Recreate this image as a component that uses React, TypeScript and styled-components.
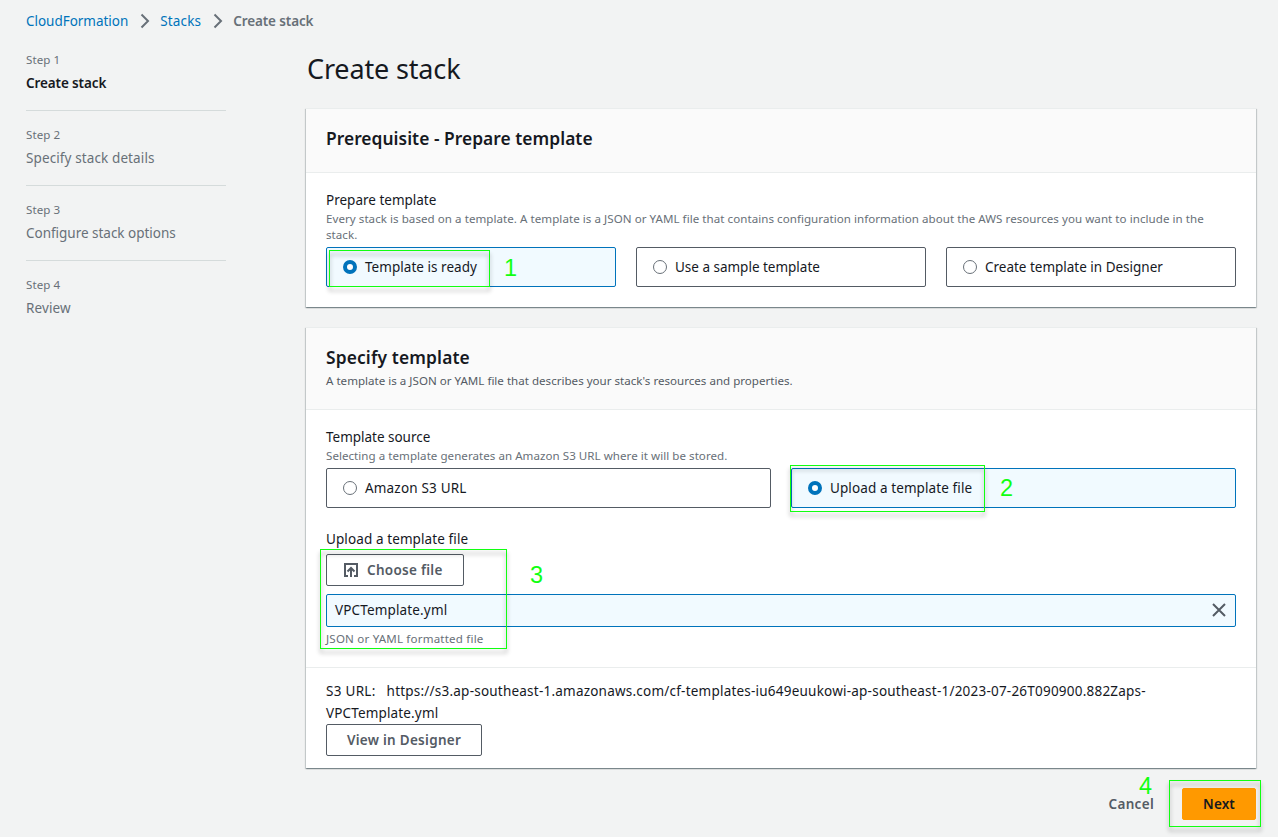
import React from "react";
import styled, { createGlobalStyle, css } from "styled-components";

const GlobalStyle = createGlobalStyle`
  * { box-sizing: border-box; }
  body {
    margin: 0;
    background: #f2f3f3;
    color: #16191f;
    font: 400 13.5px/22px "Noto Sans", "Open Sans", sans-serif;
  }
  h1, h2, p, ol, ul { margin: 0; padding: 0; list-style: none; }
`;

/* $track: letter spacing in px */
type Track = { $track?: number };
const track = css<Track>`
  letter-spacing: ${(p) => p.$track ?? 0}px;
  white-space: nowrap;
`;

const Page = styled.div`
  position: relative;
  width: 1278px;
  height: 837px;
  overflow: hidden;
  padding: 10px 22px 0 26px;
`;

const Breadcrumbs = styled.nav`
  display: flex;
  align-items: center;
  height: 22px;
`;

const Crumb = styled.a<Track>`
  ${track}
  color: #0073bb;
`;

const CurrentCrumb = styled.span<Track>`
  ${track}
  color: #687078;
  font-weight: 600;
`;

const Chevron = styled.svg`
  width: 10px;
  height: 16px;
  margin: 0 10px 0 12px;
  fill: none;
  stroke: #687078;
  stroke-width: 2;
`;

const Columns = styled.div`
  display: flex;
  gap: 79px;
`;

const Steps = styled.ol`
  width: 201px;
  padding-top: 17px;
`;

const Step = styled.li`
  height: 75px;

  &:not(:last-child)::after {
    content: "";
    display: block;
    width: 200px;
    height: 1px;
    margin-top: 16px;
    background: #d5dbdb;
  }
`;

const StepNumber = styled.div<Track>`
  ${track}
  height: 22px;
  color: #687078;
  font-size: 11.57px;
`;

const StepName = styled.div<Track & { $active?: boolean }>`
  ${track}
  height: 23px;
  line-height: 24px;
  color: ${(p) => (p.$active ? "#16191f" : "#687078")};
  font-weight: ${(p) => (p.$active ? 600 : 400)};
`;

const Main = styled.main`
  width: 950px;
`;

const Title = styled.h1<Track>`
  ${track}
  height: 76px;
  padding: 19px 0 0 1px;
  font-size: 27px;
  font-weight: 400;
  line-height: 36px;
`;

const Card = styled.section`
  margin-bottom: 20px;
  background: #fff;
  border-top: 1px solid #eaeded;
  box-shadow: 0 1px 1px 0 rgba(0, 28, 36, 0.3), 1px 1px 1px 0 rgba(0, 28, 36, 0.15),
    -1px 1px 1px 0 rgba(0, 28, 36, 0.15);
`;

const CardHeader = styled.header<{ $height: number }>`
  height: ${(p) => p.$height}px;
  padding: 18px 20px 0;
  background: #fafafa;
  border-bottom: 1px solid #eaeded;
`;

const CardTitle = styled.h2<Track>`
  ${track}
  font-size: 17.36px;
  font-weight: 600;
  line-height: 22px;
`;

const CardSubtitle = styled.p<Track>`
  ${track}
  padding-top: 4px;
  color: #545b64;
  font-size: 11.57px;
  line-height: 18px;
`;

const CardBody = styled.div`
  padding: 16px 20px 20px;
`;

const Label = styled.div<Track>`
  ${track}
  height: 22px;
`;

const Hint = styled.p<Track>`
  ${track}
  color: #687078;
  font-size: 11.57px;
  line-height: 16px;
`;

const Tiles = styled.div<{ $columns: number }>`
  display: grid;
  grid-template-columns: repeat(${(p) => p.$columns}, 1fr);
  gap: 20px;
  padding-top: 4px;
`;

const Tile = styled.label<Track & { $selected?: boolean }>`
  ${track}
  display: flex;
  align-items: center;
  gap: 8px;
  height: 40px;
  padding-left: 16px;
  border: 1px solid ${(p) => (p.$selected ? "#0073bb" : "#545b64")};
  border-radius: 2px;
  background: ${(p) => (p.$selected ? "#f1faff" : "#fff")};
`;

const Radio = styled.span<{ $selected?: boolean }>`
  width: 14px;
  height: 14px;
  border: ${(p) => (p.$selected ? "4px solid #0073bb" : "1px solid #687078")};
  border-radius: 50%;
  background: #fff;
`;

const UploadField = styled.div`
  padding-top: 20px;
`;

const Button = styled.button<Track & { $width: number; $primary?: boolean }>`
  ${track}
  display: flex;
  align-items: center;
  justify-content: center;
  gap: 8px;
  width: ${(p) => p.$width}px;
  height: 32px;
  padding: 0;
  border: 1px solid ${(p) => (p.$primary ? "#ff9900" : "#545b64")};
  border-radius: 2px;
  background: ${(p) => (p.$primary ? "#ff9900" : "#fff")};
  color: ${(p) => (p.$primary ? "#16191f" : "#545b64")};
  font: 600 13.5px/22px "Noto Sans", "Open Sans", sans-serif;
`;

const ChooseButton = styled(Button)`
  justify-content: flex-start;
  margin-top: 4px;
  padding-left: 16px;
`;

const UploadIcon = styled.svg`
  width: 16px;
  height: 16px;
  fill: none;
  stroke: #545b64;
  stroke-width: 2;
`;

const FileToken = styled.div<Track>`
  ${track}
  display: flex;
  align-items: center;
  justify-content: space-between;
  height: 33px;
  margin: 8px 0 4px;
  padding: 0 9px 1px 8px;
  border: 1px solid #0073bb;
  border-radius: 2px;
  background: #f1faff;
`;

const CloseIcon = styled.svg`
  width: 14px;
  height: 14px;
  fill: none;
  stroke: #545b64;
  stroke-width: 2;
`;

const UrlSection = styled.div`
  padding: 12px 20px 12px;
  border-top: 1px solid #eaeded;
`;

const UrlLine = styled.div`
  display: flex;
  gap: 11px;
  height: 22px;
`;

const UrlText = styled.span<Track>`
  ${track}
`;

const Actions = styled.footer`
  display: flex;
  justify-content: flex-end;
  align-items: center;
  gap: 28px;
`;

const CancelLink = styled.a<Track>`
  ${track}
  color: #545b64;
  font-weight: 600;
`;

/* Markers drawn freely over the finished page */
const Highlight = styled.div<{ $x: number; $y: number; $w: number; $h: number }>`
  position: absolute;
  left: ${(p) => p.$x}px;
  top: ${(p) => p.$y}px;
  width: ${(p) => p.$w}px;
  height: ${(p) => p.$h}px;
  border: 1px solid #1f1;
  filter: drop-shadow(0 4px 2px rgba(0, 0, 0, 0.4));
  pointer-events: none;
`;

const MarkerNumber = styled.span<{ $x: number; $y: number }>`
  position: absolute;
  left: ${(p) => p.$x}px;
  top: ${(p) => p.$y}px;
  color: #1f1;
  font: 23.5px/28px "Liberation Sans", Arial, sans-serif;
`;

const steps = [
  { name: "Create stack", track: -0.12, active: true },
  { name: "Specify stack details", track: 0.11 },
  { name: "Configure stack options", track: -0.02 },
  { name: "Review", track: 0.12 },
];

const markers = [
  { box: [329, 250, 161, 37], at: [504, 254] },
  { box: [790, 465, 195, 47], at: [1000, 474] },
  { box: [320, 549, 187, 100], at: [530, 561] },
  { box: [1169, 780, 92, 47], at: [1139, 772] },
];

const Separator = () => (
  <Chevron viewBox="0 0 10 16">
    <path d="M1.500 1.500 8 8l-6.500 6.500" />
  </Chevron>
);

export default function App() {
  return (
    <Page>
      <GlobalStyle />
      <Breadcrumbs>
        <Crumb $track={-0.03}>CloudFormation</Crumb>
        <Separator />
        <Crumb $track={0.16}>Stacks</Crumb>
        <Separator />
        <CurrentCrumb $track={-0.12}>Create stack</CurrentCrumb>
      </Breadcrumbs>

      <Columns>
        <Steps>
          {steps.map((step, i) => (
            <Step key={step.name}>
              <StepNumber $track={0.08}>Step {i + 1}</StepNumber>
              <StepName $track={step.track} $active={step.active}>
                {step.name}
              </StepName>
            </Step>
          ))}
        </Steps>

        <Main>
          <Title $track={-0.15}>Create stack</Title>

          <Card>
            <CardHeader $height={64}>
              <CardTitle $track={0.04}>Prerequisite - Prepare template</CardTitle>
            </CardHeader>
            <CardBody>
              <Label $track={0}>Prepare template</Label>
              <Hint $track={0.05}>
                Every stack is based on a template. A template is a JSON or YAML file that contains
                configuration information about the AWS resources you want to include in the
                <br />
                stack.
              </Hint>
              <Tiles $columns={3}>
                <Tile $track={0.04} $selected>
                  <Radio $selected />
                  Template is ready
                </Tile>
                <Tile $track={-0.01}>
                  <Radio />
                  Use a sample template
                </Tile>
                <Tile $track={-0.01}>
                  <Radio />
                  Create template in Designer
                </Tile>
              </Tiles>
            </CardBody>
          </Card>

          <Card>
            <CardHeader $height={82}>
              <CardTitle $track={0.14}>Specify template</CardTitle>
              <CardSubtitle $track={0.01}>
                A template is a JSON or YAML file that describes your stack's resources and
                properties.
              </CardSubtitle>
            </CardHeader>
            <CardBody>
              <Label $track={-0.02}>Template source</Label>
              <Hint $track={0.04}>
                Selecting a template generates an Amazon S3 URL where it will be stored.
              </Hint>
              <Tiles $columns={2}>
                <Tile $track={0.18}>
                  <Radio />
                  Amazon S3 URL
                </Tile>
                <Tile $track={0.1} $selected>
                  <Radio $selected />
                  Upload a template file
                </Tile>
              </Tiles>
              <UploadField>
                <Label $track={0.1}>Upload a template file</Label>
                <ChooseButton $width={138} $track={0.28}>
                  <UploadIcon viewBox="0 0 16 16">
                    <path d="M5 14H2V2h12v12h-3M8 15V6M4.500 9.500 8 6l3.500 3.500" />
                  </UploadIcon>
                  Choose file
                </ChooseButton>
                <FileToken $track={0.15}>
                  VPCTemplate.yml
                  <CloseIcon viewBox="0 0 14 14">
                    <path d="M1 1l12 12M13 1L1 13" />
                  </CloseIcon>
                </FileToken>
                <Hint $track={0.19}>JSON or YAML formatted file</Hint>
              </UploadField>
            </CardBody>
            <UrlSection>
              <UrlLine>
                <UrlText $track={0.28}>S3 URL:</UrlText>
                <UrlText $track={0.22}>
                  https://s3.ap-southeast-1.amazonaws.com/cf-templates-iu649euukowi-ap-southeast-1/2023-07-26T090900.882Zaps-
                </UrlText>
              </UrlLine>
              <UrlLine>
                <UrlText $track={0.15}>VPCTemplate.yml</UrlText>
              </UrlLine>
              <Button $width={156} $track={0.28}>
                View in Designer
              </Button>
            </UrlSection>
          </Card>

          <Actions>
            <CancelLink $track={0.3}>Cancel</CancelLink>
            <Button $width={74} $track={0.14} $primary>
              Next
            </Button>
          </Actions>
        </Main>
      </Columns>

      {markers.map(({ box: [x, y, w, h], at }, i) => (
        <React.Fragment key={i}>
          <Highlight $x={x} $y={y} $w={w} $h={h} />
          <MarkerNumber $x={at[0]} $y={at[1]}>
            {i + 1}
          </MarkerNumber>
        </React.Fragment>
      ))}
    </Page>
  );
}
